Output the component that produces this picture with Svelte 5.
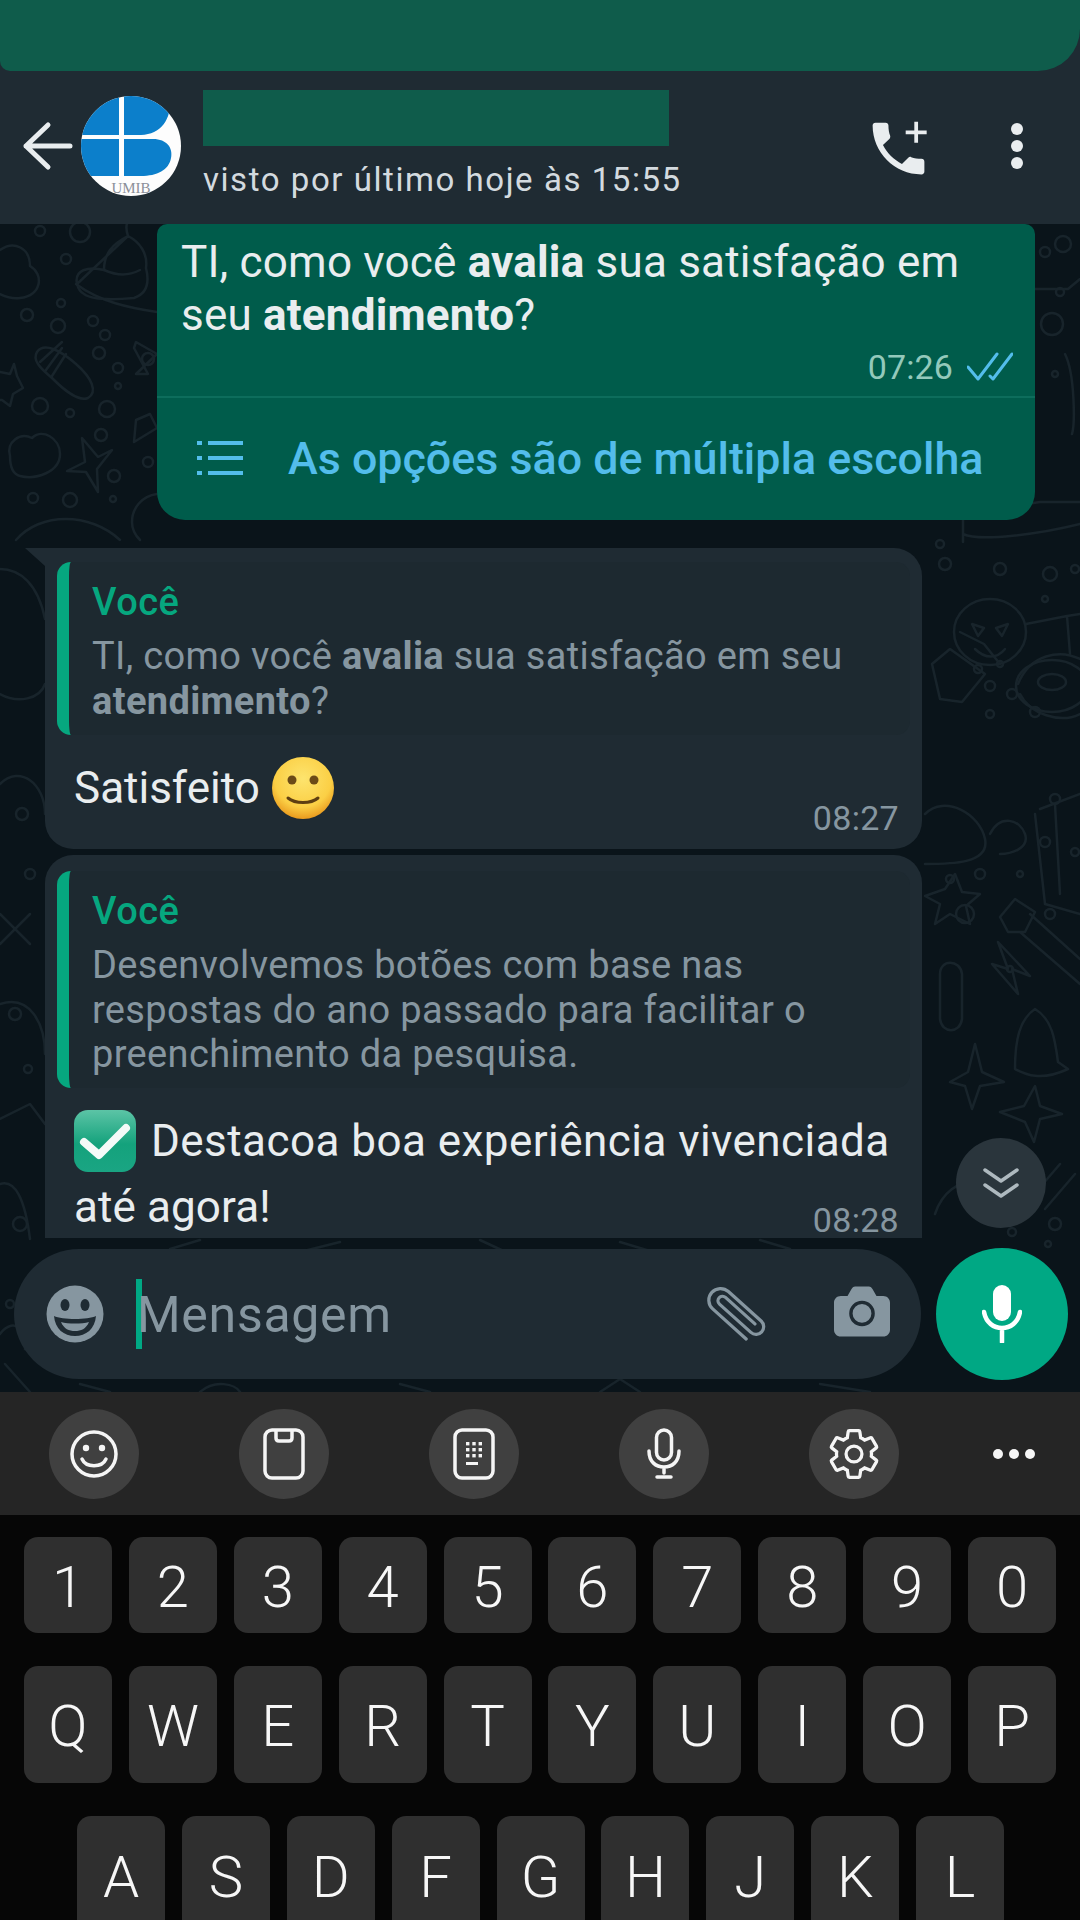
<script>
  const digits = ['1','2','3','4','5','6','7','8','9','0'];
  const row2 = ['Q','W','E','R','T','Y','U','I','O','P'];
  const row3 = ['A','S','D','F','G','H','J','K','L'];
  const rings = [
    [66,35,5],[61,79,4],[27,91,6],[58,102,7],[93,97,5],[105,111,5],[99,129,6],[118,144,5],[118,162,3],[40,182,8],[70,189,4],[107,185,8],[101,211,6],[114,252,6],[148,238,5],[33,274,5],[70,276,7],[113,275,3],[40,7,5],[80,8,10],[148,135,6],
    [1063,20,8],[1060,68,4],[1052,100,11],[1055,150,3],[1045,28,5],
    [940,320,4],[945,340,6],[1000,345,6],[1050,350,7],[1075,345,4],[1045,375,3],[978,445,4],[990,462,5],[1000,440,3],[990,490,4],[1035,488,5],[1012,470,5],
    [1045,618,5],[1075,628,4],[1055,575,5],[950,655,4],[980,650,5],[965,690,9],[1020,650,3],[1050,690,5],[1010,745,3],[985,990,7],[1012,1008,4],[1055,1000,6],[1048,1020,3],
    [22,590,6],[30,650,5],[15,790,6],[28,845,4],[20,1000,7],[10,1080,4],[32,1185,5],[18,1230,8]
  ];
  const paths = [
    'M0 26C14 16 30 24 30 42C44 50 42 72 20 74C12 75 6 73 0 70',
    'M10 232C6 218 20 208 32 214C42 204 60 214 60 230C60 248 36 256 20 252C12 250 10 240 10 232Z',
    'M67 247L85 238L82 214L98 233L112 226L97 245L98 268L86 248Z',
    'M37 128C44 118 60 126 76 140C92 154 98 168 88 174C78 178 64 166 52 154C40 144 32 136 37 128ZM40 138L62 118M46 146L62 124M52 152L66 130',
    'M0 148L10 150L14 140L17 152L23 164L13 170L10 182L2 176L0 176',
    'M77 60C74 46 88 42 104 46C104 30 112 20 128 12C124 0 128 -4 132 -6M128 12C140 18 148 30 146 44C150 60 146 70 134 74C112 76 92 76 84 70C80 68 78 64 77 60Z',
    'M104 46C118 52 128 52 140 46M76 60C100 78 130 84 157 88',
    'M157 130L136 118L134 124L148 150L136 150L157 130M136 196L150 190L157 204L134 218Z',
    'M157 270C142 272 132 284 132 298C132 306 136 312 140 316',
    'M16 316C40 288 90 288 120 316',
    'M963 318V290L1040 278H1080M963 310C980 318 1040 310 1080 300',
    'M1035 65H1068L1080 55M1065 130C1075 150 1075 200 1072 210',
    'M1026 400L1067 392L1070 430M1067 392L1080 390',
    'M960 408L984 420L1000 440M932 440L950 425L985 450L962 478L940 475Z',
    'M1018 460C1030 430 1060 425 1080 435M1020 470C1030 490 1060 500 1080 490',
    'M1040 585L1080 570M1035 590L1045 680L1080 690M1055 580L1060 670',
    'M925 590C945 570 980 590 985 615C990 640 950 640 925 640M990 610C1000 590 1020 595 1025 610C1030 625 1010 630 1000 630',
    'M945 665L955 650L962 668L980 670L966 682L970 700L950 690L935 700L940 680L925 672Z',
    'M1000 693L1015 675L1035 688L1025 708L1008 708ZM1030 690L1080 735M1020 708L1080 760',
    'M998 718L1030 752L1012 745L1018 770L992 740L1008 745Z',
    'M940 750C940 735 960 735 962 750L962 795C960 810 942 810 940 795Z',
    'M1015 845C1015 815 1020 795 1035 785C1052 795 1055 815 1058 838L1068 845C1040 858 1025 850 1015 845Z',
    'M950 858L968 848L975 820L982 848L1004 858L980 862L972 885L965 862Z',
    'M1000 888L1024 882L1035 862L1040 882L1062 890L1040 895L1034 918L1025 898Z',
    'M935 990C950 945 1000 950 1015 985M1060 940L1030 975M1075 950L1045 985',
    'M0 345C20 345 38 360 45 395M0 470C18 480 40 475 45 460',
    'M0 560C20 540 45 560 45 590M0 690L30 720M30 690L0 720',
    'M0 780C30 770 45 800 45 830M0 895L30 880L45 900M0 960C15 955 25 975 30 1015',
    'M0 1110C15 1090 30 1110 25 1125M5 1140L30 1168',
    'M80 1160L110 1168M170 1025L200 1016M300 1028L340 1018M480 1016L510 1030M620 1018L660 1030M760 1016L790 1025',
    'M200 1168C215 1155 235 1160 240 1168M400 1160L430 1168M600 1168L620 1155L640 1168M820 1160L870 1168'
  ];
</script>

<div class="screen">
  <div class="topwrap"><div class="topbar"></div></div>

  <header class="header">
    <svg class="back" viewBox="0 0 56 56" aria-hidden="true">
      <path d="M50 28H6M28 7L6 28L28 49" />
    </svg>
    <svg class="avatar" viewBox="0 0 100 100" aria-hidden="true">
      <defs><clipPath id="avc"><circle cx="50" cy="50" r="50" /></clipPath></defs>
      <g clip-path="url(#avc)">
        <rect width="100" height="100" fill="#fdfdfd" />
        <path d="M0 0H38V39H0ZM0 43H38V80H0ZM43 0H90C90 25 80 38 60 39H43ZM43 43H72C86 43 92 52 90 62C88 74 76 80 60 80H43Z" fill="#0c7fcb" />
        <text x="50" y="97" class="avtext">UMIB</text>
      </g>
    </svg>
    <div class="who">
      <div class="name"></div>
      <div class="seen">visto por último hoje às 15:55</div>
    </div>
    <svg class="call" viewBox="0 0 24 24" aria-hidden="true">
      <path d="M6.6 10.8c1.4 2.8 3.8 5.1 6.6 6.6l2.2-2.2c.3-.3.7-.4 1-.2 1.1.4 2.3.6 3.6.6.6 0 1 .4 1 1V20c0 .6-.4 1-1 1C10.6 21 3 13.4 3 4c0-.6.4-1 1-1h3.5c.6 0 1 .4 1 1 0 1.3.2 2.5.6 3.6.1.3 0 .7-.2 1l-2.3 2.2z" />
      <path d="M21.8 5.7h-3V2.7h-1.3v3h-3V7h3v3h1.3V7h3z" />
    </svg>
    <div class="dots"><i></i><i></i><i></i></div>
  </header>

  <main class="chat">
    <svg class="wall" viewBox="0 0 1080 1168" aria-hidden="true">
      {#each paths as d}<path {d} />{/each}
      {#each rings as r}<circle cx={r[0]} cy={r[1]} r={r[2]} />{/each}
      <ellipse cx="990" cy="408" rx="36" ry="33" />
      <path d="M972 400l12 4-6 8zM1008 400l-12 4 6 8zM975 425c10 10 22 10 30 0" />
      <ellipse cx="1052" cy="462" rx="36" ry="26" />
      <ellipse cx="1052" cy="458" rx="14" ry="8" />
    </svg>

    <div class="list">
      <section class="bubble out">
        <p class="out-text">TI, como você <b>avalia</b> sua satisfação em<br />seu <b>atendimento</b>?</p>
        <div class="out-meta">
          <span class="out-time">07:26</span>
          <svg class="ticks" viewBox="0 0 46 30" aria-hidden="true"><path d="M1 15L11 27L30 2M23 24L26 27L45 2" /></svg>
        </div>
        <div class="options">
          <svg class="listicon" viewBox="0 0 46 36" aria-hidden="true">
            <path class="ll" d="M11 3H46M11 18H46M11 33H46" />
            <path class="ld" d="M0 3H5M0 18H5M0 33H5" />
          </svg>
          <span>As opções são de múltipla escolha</span>
        </div>
      </section>

      <section class="bubble in first">
        <div class="quote two">
          <div class="qname">Você</div>
          <div class="qtext">TI, como você <b>avalia</b> sua satisfação em seu<br /><b>atendimento</b>?</div>
        </div>
        <div class="body one">
          Satisfeito
          <svg class="smile" viewBox="0 0 64 64" aria-hidden="true">
            <defs>
              <radialGradient id="sg" cx="50%" cy="35%" r="65%">
                <stop offset="0" stop-color="#fde46e" /><stop offset=".7" stop-color="#fbcf45" /><stop offset="1" stop-color="#e99a1e" />
              </radialGradient>
            </defs>
            <circle cx="32" cy="32" r="31" fill="url(#sg)" />
            <circle cx="21" cy="24" r="4.5" fill="#6b4a17" />
            <circle cx="43" cy="24" r="4.5" fill="#6b4a17" />
            <path d="M17 42C24 48 40 48 47 42" fill="none" stroke="#5e3f12" stroke-width="3" stroke-linecap="round" />
          </svg>
        </div>
        <span class="time t1">08:27</span>
      </section>

      <section class="bubble in second">
        <div class="quote three">
          <div class="qname">Você</div>
          <div class="qtext">Desenvolvemos botões com base nas<br />respostas do ano passado para facilitar o<br />preenchimento da pesquisa.</div>
        </div>
        <div class="body two">
          <div class="bl1">
            <svg class="check" viewBox="0 0 62 62" aria-hidden="true">
              <defs>
                <linearGradient id="cg" x1="0" y1="0" x2="0" y2="1">
                  <stop offset="0" stop-color="#5cc4a6" /><stop offset=".55" stop-color="#14a27c" /><stop offset="1" stop-color="#1aa583" />
                </linearGradient>
              </defs>
              <rect width="62" height="62" rx="14" fill="url(#cg)" />
              <path d="M10 32L25 45L52 18" fill="none" stroke="#f4faf8" stroke-width="8" stroke-linecap="round" stroke-linejoin="round" />
            </svg>
            <span>Destacoa boa experiência vivenciada</span>
          </div>
          <div class="bl2">até agora!</div>
        </div>
        <span class="time t2">08:28</span>
      </section>
    </div>

    <button class="down" aria-label="Rolar para baixo">
      <svg viewBox="0 0 36 32" aria-hidden="true"><path d="M2 3L18 14L34 3M2 18L18 29L34 18" /></svg>
    </button>

    <div class="composer">
      <div class="field">
        <svg class="face" viewBox="0 0 58 58" aria-hidden="true">
          <circle cx="29" cy="29" r="28.5" fill="#8696a0" />
          <ellipse cx="19" cy="20" rx="4.5" ry="6" fill="#1f2b33" />
          <ellipse cx="39" cy="20" rx="4.5" ry="6" fill="#1f2b33" />
          <path d="M8 31C16 35 42 35 50 31C49 44 40 51 29 51C18 51 9 44 8 31Z" fill="#1f2b33" />
          <path d="M15 37C22 39 36 39 43 37C40 44 35 46 29 46C23 46 18 44 15 37Z" fill="#8696a0" />
        </svg>
        <span class="caret"></span>
        <span class="placeholder">Mensagem</span>
        <svg class="clip" viewBox="-40 -40 80 80" aria-hidden="true">
          <path transform="rotate(42)" d="M22 -2H-22A5 5 0 0 0 -22 8H25A8.5 8.5 0 0 0 25 -9H-24A13 13 0 0 0 -24 17H26" />
        </svg>
        <svg class="camera" viewBox="0 0 58 52" aria-hidden="true">
          <path d="M7 10H14L18 3C19 1 20 0 22 0H36C38 0 39 1 40 3L44 10H51C55 10 58 13 58 17V45C58 49 55 52 51 52H7C3 52 0 49 0 45V17C0 13 3 10 7 10Z" fill="#8696a0" />
          <circle cx="29" cy="28" r="11.5" fill="#8696a0" stroke="#1f2b33" stroke-width="3.5" />
        </svg>
      </div>
      <button class="mic" aria-label="Gravar áudio">
        <svg viewBox="0 0 40 58" aria-hidden="true">
          <rect x="11" y="0" width="18" height="36" rx="9" fill="#fff" />
          <path d="M2 27C4 38 12 43 20 43C28 43 36 38 38 27M20 43V57" fill="none" stroke="#fff" stroke-width="4.5" stroke-linecap="round" />
        </svg>
      </button>
    </div>
  </main>

  <nav class="toolbar">
    <span class="tool">
      <svg viewBox="0 0 56 56" aria-hidden="true">
        <circle cx="28" cy="28" r="22" />
        <circle class="fill" cx="20" cy="22" r="3.2" /><circle class="fill" cx="36" cy="22" r="3.2" />
        <path d="M16 33C20 42 36 42 40 33" />
      </svg>
    </span>
    <span class="tool">
      <svg viewBox="0 0 56 56" aria-hidden="true">
        <rect x="9" y="4" width="38" height="48" rx="7" />
        <path d="M20 5V12C20 14 21 15 23 15H33C35 15 36 14 36 12V5" />
      </svg>
    </span>
    <span class="tool">
      <svg viewBox="0 0 56 56" aria-hidden="true">
        <rect x="9" y="4" width="38" height="48" rx="7" />
        <g class="fill">
          <rect x="20" y="16" width="3.4" height="3.4" /><rect x="26.3" y="16" width="3.4" height="3.4" /><rect x="32.6" y="16" width="3.4" height="3.4" />
          <rect x="20" y="22" width="3.4" height="3.4" /><rect x="26.3" y="22" width="3.4" height="3.4" /><rect x="32.6" y="22" width="3.4" height="3.4" />
          <rect x="20" y="28" width="3.4" height="3.4" /><rect x="26.3" y="28" width="3.4" height="3.4" /><rect x="32.6" y="28" width="3.4" height="3.4" />
          <rect x="20" y="36" width="12" height="3" />
        </g>
      </svg>
    </span>
    <span class="tool">
      <svg viewBox="0 0 56 56" aria-hidden="true">
        <rect x="20.5" y="4" width="15" height="30" rx="7.5" />
        <path d="M13 25C13 36 20 41 28 41C36 41 43 36 43 25M28 41V47M21 51H35" />
      </svg>
    </span>
    <span class="tool">
      <svg class="gear" viewBox="0 0 24 24" aria-hidden="true">
        <path d="M19.43 12.98c.04-.32.07-.64.07-.98 0-.34-.03-.66-.07-.98l2.11-1.65c.19-.15.24-.42.12-.64l-2-3.46c-.09-.16-.26-.25-.44-.25-.06 0-.12.01-.17.03l-2.49 1c-.52-.4-1.08-.73-1.69-.98l-.38-2.65C14.46 2.18 14.25 2 14 2h-4c-.25 0-.46.18-.49.42l-.38 2.65c-.61.25-1.17.59-1.69.98l-2.49-1c-.06-.02-.12-.03-.18-.03-.17 0-.34.09-.43.25l-2 3.46c-.13.22-.07.49.12.64l2.11 1.65c-.04.32-.07.65-.07.98 0 .33.03.66.07.98l-2.11 1.65c-.19.15-.24.42-.12.64l2 3.46c.09.16.26.25.44.25.06 0 .12-.01.17-.03l2.49-1c.52.4 1.08.73 1.69.98l.38 2.65c.03.24.24.42.49.42h4c.25 0 .46-.18.49-.42l.38-2.65c.61-.25 1.17-.59 1.69-.98l2.49 1c.06.02.12.03.18.03.17 0 .34-.09.43-.25l2-3.46c.12-.22.07-.49-.12-.64l-2.11-1.65z" />
        <circle cx="12" cy="12" r="3.4" />
      </svg>
    </span>
    <span class="more"><i></i><i></i><i></i></span>
  </nav>

  <section class="keyboard">
    <div class="keys r1">{#each digits as k}<span class="key">{k}</span>{/each}</div>
    <div class="keys r2">{#each row2 as k}<span class="key">{k}</span>{/each}</div>
    <div class="keys r3">{#each row3 as k}<span class="key">{k}</span>{/each}</div>
  </section>
</div>

<style>
  :global(body) { margin: 0; background: #060606; }
  .screen {
    width: 1080px; height: 1920px; overflow: hidden;
    display: flex; flex-direction: column;
    font-family: Roboto, "Noto Sans", sans-serif;
    -webkit-font-smoothing: antialiased;
  }
  .topwrap { height: 71px; background: #1f2b33; flex: none; }
  .topbar { height: 71px; background: #0f5c4b; border-radius: 0 0 42px 10px; }

  .header {
    height: 153px; flex: none; background: #1f2b33;
    display: flex; align-items: flex-start; color: #e9edef;
  }
  .back { width: 56px; height: 56px; margin: 47px 0 0 20px; flex: none; }
  .back path { fill: none; stroke: #e9edef; stroke-width: 5; stroke-linecap: round; stroke-linejoin: round; }
  .avatar { width: 100px; height: 100px; margin: 25px 0 0 5px; flex: none; }
  .avtext { font-family: "Liberation Serif", serif; font-size: 15px; fill: #8a8f98; text-anchor: middle; }
  .who { margin: 19px 0 0 22px; width: 661px; flex: none; }
  .name { width: 466px; height: 56px; background: #0f5c4b; }
  .seen { font-size: 33px; line-height: 40px; margin-top: 14px; color: #d3dadf; letter-spacing: 1.55px; white-space: nowrap; }
  .call { width: 69px; height: 69px; margin: 43px 0 0 0; flex: none; fill: #e9edef; }
  .dots { margin: 52px 0 0 78px; display: flex; flex-direction: column; gap: 5px; }
  .dots i { width: 12px; height: 12px; border-radius: 50%; background: #e9edef; display: block; }

  .chat { flex: 1; min-height: 0; position: relative; background: #0a141a; display: flex; flex-direction: column; }
  .wall { position: absolute; inset: 0; width: 1080px; height: 1168px; }
  .wall path, .wall circle, .wall ellipse { fill: none; stroke: #18242b; stroke-width: 2.5; stroke-linejoin: round; stroke-linecap: round; }

  .list { position: relative; height: 1014px; flex: none; overflow: hidden; display: flex; flex-direction: column; }

  .bubble { position: relative; box-sizing: border-box; flex: none; }
  .out {
    width: 878px; height: 296px; margin-left: 157px;
    background: #005c4b; border-radius: 10px 10px 28px 28px;
    color: #e9edef;
  }
  .out-text { margin: 0; padding: 12px 24px 0; font-size: 44px; line-height: 53px; letter-spacing: .2px; height: 118px; white-space: nowrap; }
  .out-text b, .qtext b { font-weight: 700; }
  .out-meta { display: flex; justify-content: flex-end; align-items: center; height: 40px; padding-right: 22px; gap: 14px; margin-top: -7px; }
  .out-time { font-size: 34px; color: #93c9bb; letter-spacing: .1px; }
  .ticks { width: 46px; height: 30px; }
  .ticks path { fill: none; stroke: #53bdeb; stroke-width: 3; stroke-linecap: round; stroke-linejoin: round; }
  .options {
    margin-top: 9px; border-top: 2px solid #0d6d5c;
    height: 122px; box-sizing: border-box;
    display: flex; align-items: center; padding-left: 40px;
    color: #53bdeb; font-size: 44.8px; font-weight: 500; white-space: nowrap;
  }
  .listicon { width: 46px; height: 36px; margin-right: 45px; flex: none; }
  .ll, .ld { fill: none; stroke: #53bdeb; stroke-width: 4; }

  .in { width: 877px; margin-left: 45px; background: #1f2b33; padding: 14px 12px 0; color: #e9edef; }
  .first { margin-top: 28px; height: 301px; border-radius: 0 28px 28px 28px; }
  .first::before {
    content: ""; position: absolute; left: -20px; top: 0;
    border-style: solid; border-width: 0 20px 18px 0;
    border-color: transparent #1f2b33 transparent transparent;
  }
  .second { margin-top: 6px; height: 383px; border-radius: 28px 28px 0 0; padding-top: 16px; }

  .quote { box-sizing: border-box; border-left: 12px solid #06a77f; border-radius: 14px; background: #1d2930; padding: 16px 0 0 23px; }
  .quote.two { height: 173px; }
  .quote.three { height: 217px; }
  .qname { color: #06a77f; font-size: 38px; line-height: 48px; font-weight: 500; letter-spacing: .5px; }
  .qtext { color: #8696a0; font-size: 38px; line-height: 44.5px; margin-top: 8px; letter-spacing: .35px; white-space: nowrap; }

  .body { font-size: 44px; color: #e9edef; }
  .body.one { display: flex; align-items: center; gap: 11px; margin: 21px 0 0 17px; height: 64px; }
  .smile { width: 64px; height: 64px; flex: none; }
  .body.two { margin: 22px 0 0 17px; }
  .bl1 { display: flex; align-items: center; gap: 15px; height: 62px; white-space: nowrap; letter-spacing: .45px; }
  .check { width: 62px; height: 62px; flex: none; }
  .bl2 { line-height: 50px; margin-top: 10px; letter-spacing: .1px; }
  .time { position: absolute; right: 23px; font-size: 34px; line-height: 40px; color: #8696a0; letter-spacing: .3px; }
  .t1 { top: 250px; }
  .t2 { top: 347px; line-height: 36px; }

  .down {
    position: absolute; left: 956px; top: 914px;
    width: 90px; height: 90px; border-radius: 50%; border: 0; padding: 0;
    background: #2a353c; display: flex; align-items: center; justify-content: center;
  }
  .down svg { width: 36px; height: 32px; }
  .down path { fill: none; stroke: #aeb9bf; stroke-width: 3.5; stroke-linecap: round; stroke-linejoin: round; }

  .composer { position: relative; display: flex; align-items: center; padding-left: 14px; margin-top: 10px; gap: 15px; }
  .field {
    width: 907px; height: 130px; border-radius: 65px; background: #1f2b33;
    display: flex; align-items: center; position: relative;
  }
  .face { width: 58px; height: 58px; margin-left: 32px; flex: none; }
  .caret { width: 6px; height: 70px; background: #00a884; margin-left: 32px; flex: none; }
  .placeholder { font-size: 50px; color: #8696a0; margin: 2px 0 0 -5px; letter-spacing: .7px; width: 330px; flex: none; }
  .clip { width: 72px; height: 72px; margin-left: 236px; flex: none; margin-top: -4px; }
  .clip path { fill: none; stroke: #8696a0; stroke-width: 3.6; stroke-linecap: round; }
  .camera { width: 56px; height: 51px; margin-left: 59px; flex: none; margin-top: -6px; }
  .mic {
    width: 132px; height: 132px; border-radius: 50%; border: 0; padding: 0; background: #00a884;
    display: flex; align-items: center; justify-content: center; flex: none; margin-left: 0;
  }
  .mic svg { width: 40px; height: 58px; }

  .toolbar {
    height: 123px; flex: none; background: #252525; position: relative;
    display: flex; align-items: center; padding-left: 49px; gap: 100px; box-sizing: border-box;
  }
  .tool { width: 90px; height: 90px; border-radius: 50%; background: #404040; display: flex; align-items: center; justify-content: center; flex: none; }
  .tool svg { width: 56px; height: 56px; }
  .tool svg * { fill: none; stroke: #f5f5f5; stroke-width: 3.5; stroke-linecap: round; }
  .tool svg .fill, .tool svg .fill * { fill: #f5f5f5; stroke: none; }
  .tool .gear * { stroke-width: 1.4; }
  .more { display: flex; gap: 6px; margin-left: -6px; }
  .more i { width: 10px; height: 10px; border-radius: 50%; background: #f5f5f5; display: block; }

  .keyboard { flex: none; height: 405px; background: #060606; padding-top: 22px; box-sizing: border-box; }
  .keys { display: flex; gap: 16.9px; color: #f7f7f7; align-items: flex-start; }
  .key {
    width: 88px; height: 100%; box-sizing: border-box; padding-top: 3px;
    border-radius: 14px; background: #2f2f2f;
    display: flex; align-items: center; justify-content: center; flex: none;
    font-size: 58px; font-weight: 350;
  }
  .r1 { padding-left: 24px; height: 96px; }
  .r2 { padding-left: 24px; height: 117px; margin-top: 33px; }
  .r3 { padding-left: 77px; height: 117px; margin-top: 33px; }
  .r3 .key { height: 140px; padding: 0 0 18px; }
</style>
